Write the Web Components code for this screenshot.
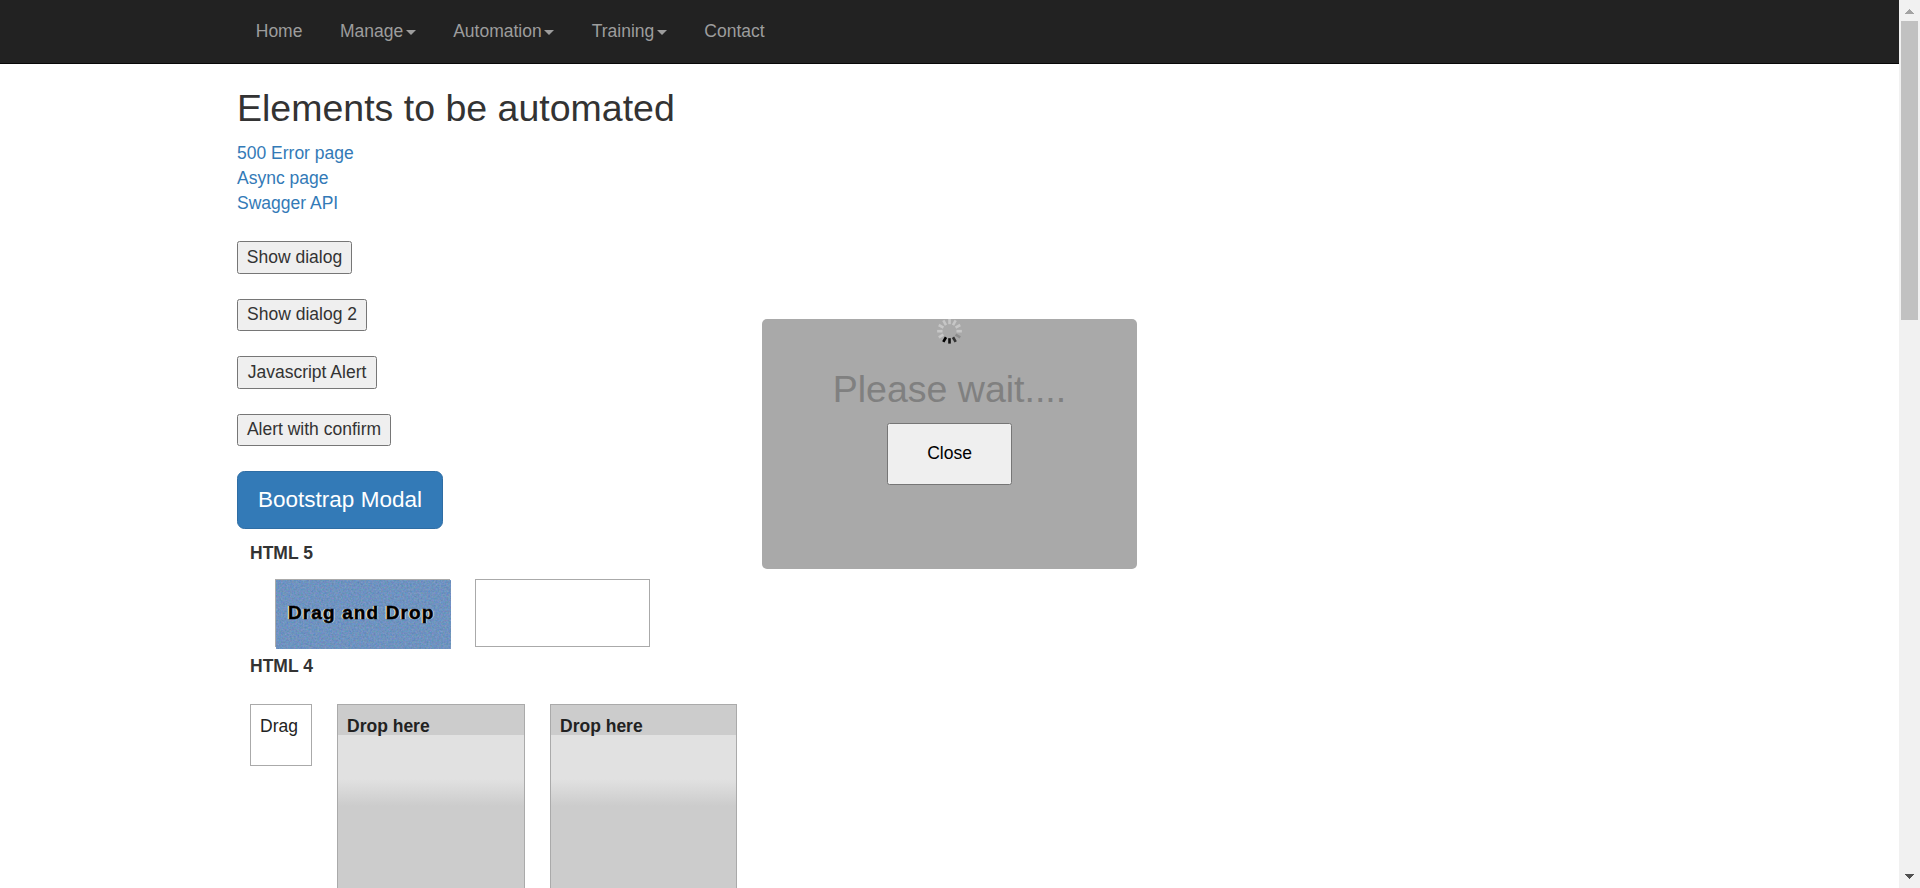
<!DOCTYPE html>
<html lang="en">
<head>
<meta charset="utf-8">
<title>Elements to be automated</title>
<style>
html,body{margin:0;height:100%;overflow:hidden;background:#fff}
body{font:17.5px/25px "Liberation Sans",Arial,sans-serif;color:#333}
</style>
</head>
<body>
<app-shell>
  <nav-bar slot="nav">
    <nav-item>Home</nav-item><nav-item caret>Manage</nav-item><nav-item caret>Automation</nav-item><nav-item caret>Training</nav-item><nav-item>Contact</nav-item>
  </nav-bar>
  <page-title>Elements to be automated</page-title>
  <link-list><text-link>500 Error page</text-link><text-link>Async page</text-link><text-link>Swagger API</text-link></link-list>
  <button-stack>
    <plain-button style="width:115px;height:33px">Show dialog</plain-button>
    <plain-button style="width:130px;height:32px;margin-top:25px">Show dialog 2</plain-button>
    <plain-button style="width:140px;height:33px;margin-top:25px">Javascript Alert</plain-button>
    <plain-button style="width:154px;height:32px;margin-top:25px">Alert with confirm</plain-button>
    <primary-button>Bootstrap Modal</primary-button>
  </button-stack>
  <html5-zone></html5-zone>
  <html4-zone></html4-zone>
  <wait-dialog slot="overlay"></wait-dialog>
</app-shell>
<script>
const define = (name, css, html) => customElements.define(name, class extends HTMLElement {
  constructor() {
    super();
    const t = document.createElement('template');
    t.innerHTML = `<style>*{box-sizing:border-box}${css}</style>${html}`;
    this.attachShadow({mode: 'open'}).append(t.content.cloneNode(true));
  }
});

define('scroll-bar', `
:host{display:flex;flex-direction:column;align-items:center;width:21px;height:100%;background:#f1f1f1}
svg{display:block;width:21px;height:21px;flex:none}
.thumb{width:17px;height:299px;background:#c1c1c1}
.gap{flex:1}`, `
<svg viewBox="0 0 21 21" shape-rendering="crispEdges"><path fill="#a3a3a3" d="M10 9h1v1h1v1h1v1h1v1h1v1H6v-1h1v-1h1v-1h1v-1h1z"/></svg>
<div class="thumb"></div><div class="gap"></div>
<svg viewBox="0 0 21 21" shape-rendering="crispEdges"><path fill="#505050" d="M6 7h9v1h-1v1h-1v1h-1v1h-1v1h-1v-1H9v-1H8V9H7V8H6z"/></svg>`);

define('app-shell', `
:host{display:grid;grid-template-columns:1fr 21px;height:888px;position:relative;overflow:hidden}
.view{min-width:0;height:888px;overflow:hidden}
main{padding:23.75px 0 0 237px}`, `
<div class="view"><slot name="nav"></slot><main><slot></slot></main></div><scroll-bar></scroll-bar><slot name="overlay"></slot>`);

define('nav-bar', `
:host{display:flex;box-sizing:border-box;height:64px;background:#222;border-bottom:1px solid #080808;padding-left:237px}`, `<slot></slot>`);

define('nav-item', `
:host{display:flex;align-items:center;box-sizing:border-box;height:62px;padding:0 18.75px;color:#9d9d9d}
i{display:none;width:0;height:0;margin:2px 0 0 2.5px;border:5px solid transparent;border-top-color:#9d9d9d;border-bottom:0}
:host([caret]) i{display:block}`, `<slot></slot><i></i>`);

define('page-title', `
:host{display:block}
h2{margin:0;font-size:37.5px;line-height:41.25px;font-weight:500}`, `<h2><slot></slot></h2>`);

define('link-list', `:host{display:flex;flex-direction:column;align-items:flex-start;margin-top:12px}`, `<slot></slot>`);
define('text-link', `:host{display:block;height:25px;color:#337ab7}`, `<slot></slot>`);

define('button-stack', `:host{display:flex;flex-direction:column;align-items:flex-start;margin-top:25px}`, `<slot></slot>`);
define('plain-button', `
:host{display:flex;box-sizing:border-box;background:#efefef;border:1px solid #767676;border-radius:2.5px;align-items:center;justify-content:center;white-space:nowrap;padding-bottom:1px;line-height:25px}`, `<slot></slot>`);
define('primary-button', `
:host{display:flex;box-sizing:border-box;align-items:center;justify-content:center;width:206px;height:58px;margin-top:25px;padding-bottom:2px;background:#337ab7;border:1px solid #2e6da4;border-radius:7.5px;color:#fff;font-size:22.5px}`, `<slot></slot>`);

define('html5-zone', `
:host{display:block;padding:12px 0 0 13px}
b{display:block;height:25px}
.row{display:flex;gap:25px;padding:13px 0 0 25px}
.box{width:175px;height:68px;border:1px solid #aaa}
.art{display:grid;width:175px;height:69px}
.art>*{grid-area:1/1}
.art span{z-index:1;padding:20px 0 0 12px;font-size:19px;font-weight:700;letter-spacing:1.12px;color:#000;white-space:nowrap;-webkit-text-stroke:.55px #000;text-shadow:-1.5px 0 0 #e6e2d8,1px 0 0 #cfe2f0}
svg{display:block}`, `
<b>HTML 5</b>
<div class="row">
  <div class="box"><div class="art"><svg width="175" height="69" viewBox="0 0 175 69">
    <defs><filter id="grain" x="0" y="0" width="100%" height="100%" color-interpolation-filters="sRGB">
      <feTurbulence type="fractalNoise" baseFrequency=".55" numOctaves="2" seed="4"/>
      <feColorMatrix values=".26 0 0 0 .305  0 .18 0 0 .485  0 0 .2 0 .65  0 0 0 0 1"/>
    </filter></defs>
    <rect width="175" height="69" fill="#6f94c4"/><rect width="175" height="69" filter="url(#grain)"/>
  </svg><span>Drag and Drop</span></div></div>
  <div class="box"></div>
</div>`);

define('drop-target', `
:host{display:block;box-sizing:border-box;height:190px;border:1px solid #aaa;color:#222;font-weight:700;padding:9px 9px;
background:linear-gradient(#ccc 0 30px,#e1e1e1 30px 74px,#ccc 101px)}`, `<slot></slot>`);

define('html4-zone', `
:host{display:block;padding:7px 0 0 13px}
b{display:block;height:25px}
.row{display:grid;grid-template-columns:62px 188px 187px;gap:25px;padding-top:25px;align-items:start}
.drag{height:62px;border:1px solid #aaa;padding:9px;color:#222}`, `
<b>HTML 4</b>
<div class="row"><div class="drag">Drag</div><drop-target>Drop here</drop-target><drop-target>Drop here</drop-target></div>`);

define('busy-spinner', `:host{display:block;width:26px;height:25px}svg{display:block}`, `
<svg width="26" height="25" viewBox="-12.5 -12.2 26 25" fill="none" stroke-width="2.6">
  <g stroke="#c6c6c6"><path d="M0-7V-12.4"/><path d="M0-7V-12.4" transform="rotate(30)"/><path d="M0-7V-12.4" transform="rotate(60)"/><path d="M0-7V-12.4" transform="rotate(90)"/><path d="M0-7V-12.4" transform="rotate(240)"/><path d="M0-7V-12.4" transform="rotate(270)"/><path d="M0-7V-12.4" transform="rotate(300)"/><path d="M0-7V-12.4" transform="rotate(330)"/></g>
  <path stroke="#8c8c8c" d="M0-7V-12.4" transform="rotate(120)"/>
  <path stroke="#333" d="M0-7V-12.4" transform="rotate(150)"/>
  <path stroke="#111" d="M0-7V-12.4" transform="rotate(180)"/>
  <path stroke="#000" d="M0-7V-12.4" transform="rotate(210)"/>
</svg>`);

define('wait-dialog', `
:host{position:absolute;left:762px;top:319px;box-sizing:border-box;width:375px;height:250px;display:flex;flex-direction:column;align-items:center;background:#a9a9a9;border-radius:5px}
h2{margin:25px 0 0;font-size:37.5px;line-height:41px;font-weight:500;color:#808080}
plain-button{width:125px;height:62px;margin-top:13px;color:#000;padding-bottom:2px}`, `
<busy-spinner></busy-spinner><h2>Please wait....</h2><plain-button>Close</plain-button>`);
</script>
</body>
</html>
